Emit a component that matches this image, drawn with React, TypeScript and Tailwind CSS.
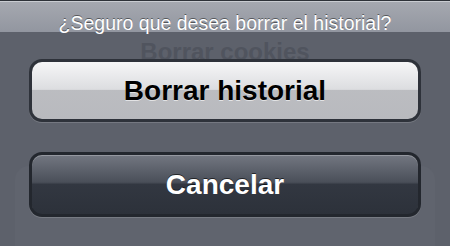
export default function App() {
  return (
    <div
      className="relative h-[246px] w-[450px] overflow-hidden bg-[#5d616b]"
      style={{ fontFamily: '"Liberation Sans", Arial, sans-serif' }}
    >
      {/* ghost table behind the dimmed overlay */}
      <div className="absolute inset-0 text-[24px] font-bold">
        <div className="absolute left-0 right-0 top-[34px] text-center text-[#50545e]">Borrar cookies</div>
        <div className="absolute left-0 right-0 top-[96px] text-center text-[#e4e5e8]">Borrar caché</div>
        <div className="absolute left-[15px] right-[15px] top-[166px] h-[120px] rounded-[14px] bg-[#60646e]" />
        <div className="absolute left-[36px] top-[180px] text-[#596070]">Desarrolladores</div>
      </div>

      <div className="relative flex h-full flex-col">
        <div className="absolute left-0 right-0 top-0 h-[32px] border-t border-[#2e3238] bg-gradient-to-b from-[#a6a9b0] to-[#9296a0] shadow-[inset_0_1px_0_#c9ccd1]" />
        <div className="relative pt-[12px] text-center text-[19.5px] leading-[22px] text-white [text-shadow:0_-1px_0_rgba(0,0,0,0.45)]">
          ¿Seguro que desea borrar el historial?
        </div>

        <div className="relative mx-[29px] mt-[25px] rounded-[13px] bg-[#2e323a] p-[3px] shadow-[0_1px_0_rgba(255,255,255,0.15)]">
          <button
            type="button"
            className="flex h-[57px] w-full items-center justify-center rounded-[10px] bg-[linear-gradient(180deg,#f6f6f7_0%,#dcdde0_48%,rgba(198,199,203,0.93)_50%,rgba(195,196,200,0.93)_100%)] text-[28px] font-bold text-black [text-shadow:0_1px_0_rgba(255,255,255,0.6)]"
          >
            Borrar historial
          </button>
        </div>

        <div className="relative mx-[29px] mt-[30px] rounded-[13px] bg-[#23272e] p-[3px] shadow-[0_1px_0_rgba(255,255,255,0.15)]">
          <button
            type="button"
            className="flex h-[59px] w-full items-center justify-center rounded-[10px] bg-[linear-gradient(180deg,#737781_0%,#4a4f59_46%,rgba(51,56,66,0.95)_50%,rgba(45,50,59,0.95)_100%)] text-[28px] font-bold text-white shadow-[inset_0_1px_0_rgba(255,255,255,0.25)] [text-shadow:0_-1px_0_rgba(0,0,0,0.6)]"
          >
            Cancelar
          </button>
        </div>
      </div>
    </div>
  );
}
